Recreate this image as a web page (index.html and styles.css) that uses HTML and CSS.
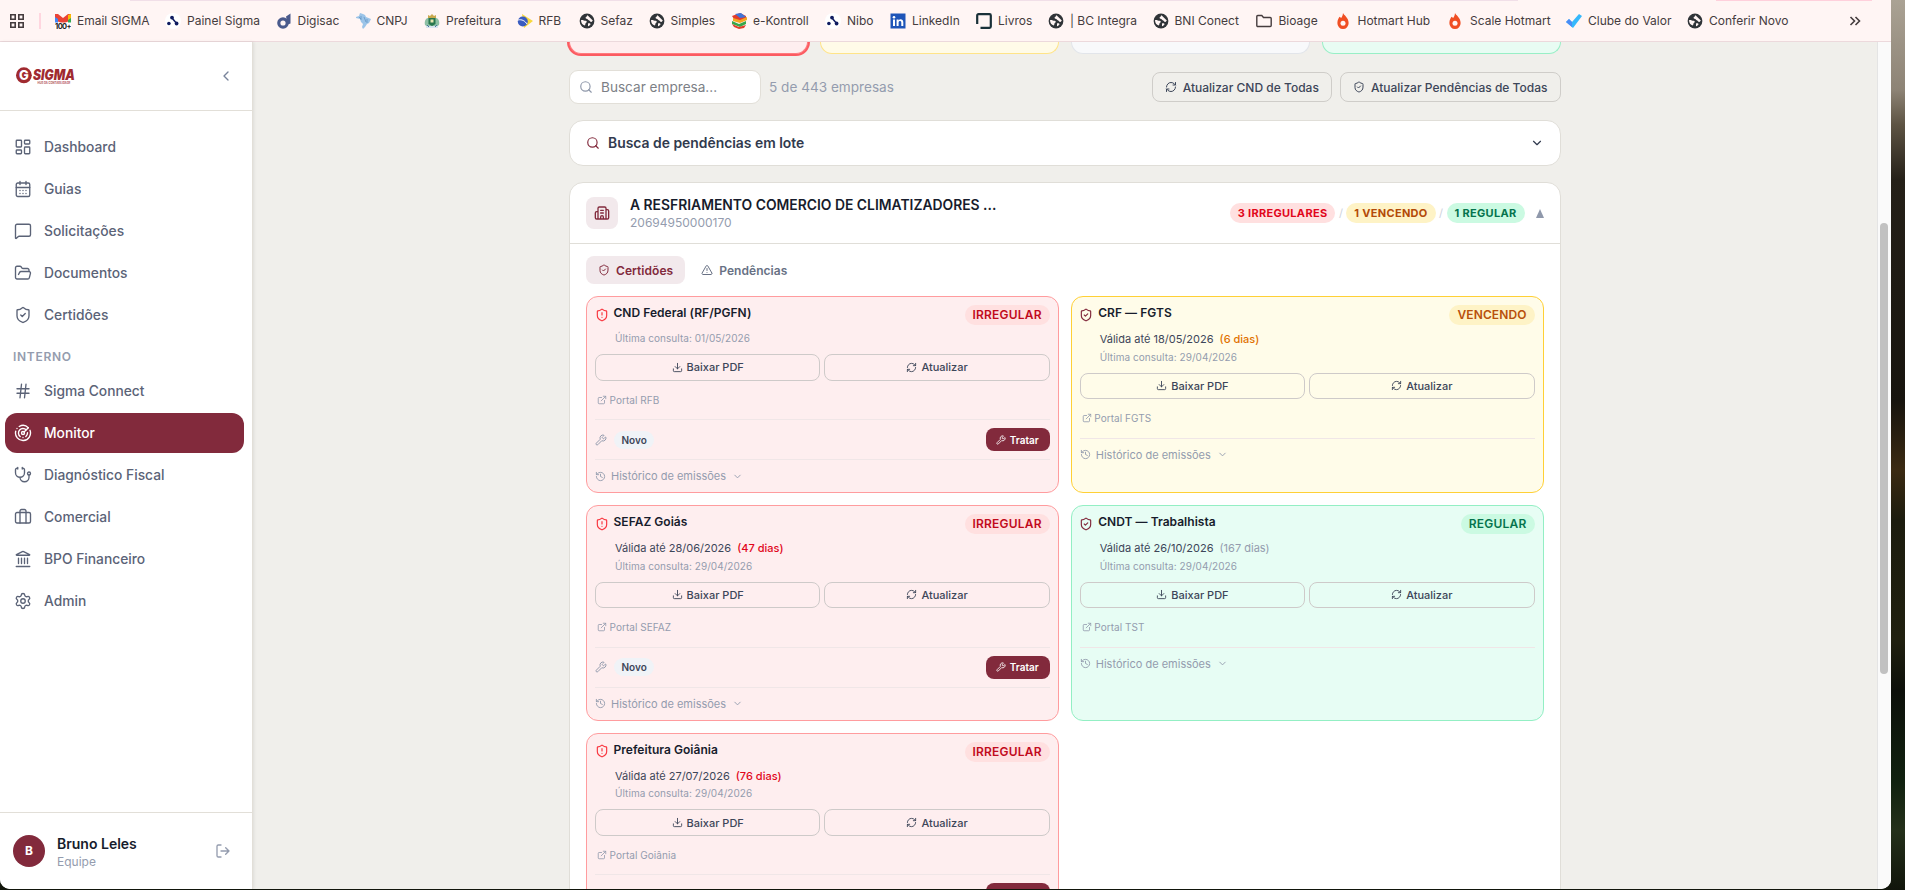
FILE: index.html
```
<!DOCTYPE html>
<html lang="pt-BR">
<head>
    <meta charset="UTF-8">
    <meta name="viewport" content="width=device-width, initial-scale=1.0">
    <title>Monitor - Sigma</title>
    <link rel="stylesheet" href="styles.css">
</head>
<body>
    <svg class="sprite">
        <symbol id="dashboard" viewBox="0 0 24 24"><rect x="3" y="3" width="7" height="9" rx="1"/><rect x="14" y="3" width="7" height="5" rx="1"/><rect x="14" y="12" width="7" height="9" rx="1"/><rect x="3" y="16" width="7" height="5" rx="1"/></symbol>
        <symbol id="calendar" viewBox="0 0 24 24"><path d="M8 2v4M16 2v4M3 10h18M8 14h.01M12 14h.01M16 14h.01M8 18h.01M12 18h.01M16 18h.01"/><rect x="3" y="4" width="18" height="18" rx="2"/></symbol>
        <symbol id="message" viewBox="0 0 24 24"><path d="M22 17a2 2 0 0 1-2 2H6.828a2 2 0 0 0-1.414.586l-2.202 2.202A.71.71 0 0 1 2 21.286V5a2 2 0 0 1 2-2h16a2 2 0 0 1 2 2z"/></symbol>
        <symbol id="folder-open" viewBox="0 0 24 24"><path d="m6 14 1.5-2.9A2 2 0 0 1 9.24 10H20a2 2 0 0 1 1.94 2.5l-1.54 6a2 2 0 0 1-1.95 1.5H4a2 2 0 0 1-2-2V5a2 2 0 0 1 2-2h3.9a2 2 0 0 1 1.69.9l.81 1.2a2 2 0 0 0 1.67.9H18a2 2 0 0 1 2 2v2"/></symbol>
        <symbol id="shield-check" viewBox="0 0 24 24"><path d="M20 13c0 5-3.5 7.5-7.66 8.95a1 1 0 0 1-.67-.01C7.5 20.5 4 18 4 13V6a1 1 0 0 1 1-1c2 0 4.5-1.2 6.24-2.72a1.17 1.17 0 0 1 1.52 0C14.51 3.81 17 5 19 5a1 1 0 0 1 1 1z"/><path d="m9 12 2 2 4-4"/></symbol>
        <symbol id="shield-alert" viewBox="0 0 24 24"><path d="M20 13c0 5-3.5 7.5-7.66 8.95a1 1 0 0 1-.67-.01C7.5 20.5 4 18 4 13V6a1 1 0 0 1 1-1c2 0 4.5-1.2 6.24-2.72a1.17 1.17 0 0 1 1.52 0C14.51 3.81 17 5 19 5a1 1 0 0 1 1 1z"/><path d="M12 8v4M12 16h.01"/></symbol>
        <symbol id="hash" viewBox="0 0 24 24"><path d="M4 9h16M4 15h16M10 3 8 21M16 3l-2 18"/></symbol>
        <symbol id="radar" viewBox="0 0 24 24"><path d="M19.07 4.93A10 10 0 0 0 6.99 3.34M4 6h.01M2.29 9.62A10 10 0 1 0 21.31 8.35M16.24 7.76A6 6 0 1 0 8.23 16.67M12 18h.01M17.99 11.66A6 6 0 0 1 15.77 16.67"/><circle cx="12" cy="12" r="2"/><path d="m13.41 10.59 5.66-5.66"/></symbol>
        <symbol id="stethoscope" viewBox="0 0 24 24"><path d="M11 2v2M5 2v2M5 3H4a2 2 0 0 0-2 2v4a6 6 0 0 0 12 0V5a2 2 0 0 0-2-2h-1M8 15a6 6 0 0 0 12 0v-3"/><circle cx="20" cy="10" r="2"/></symbol>
        <symbol id="briefcase" viewBox="0 0 24 24"><path d="M16 20V4a2 2 0 0 0-2-2h-4a2 2 0 0 0-2 2v16"/><rect x="2" y="6" width="20" height="14" rx="2"/></symbol>
        <symbol id="landmark" viewBox="0 0 24 24"><path d="M10 18v-7M11.12 2.198a2 2 0 0 1 1.76.006l7.866 3.847c.476.233.31.949-.22.949H3.474c-.53 0-.695-.716-.22-.949zM14 18v-7M18 18v-7M3 22h18M6 18v-7"/></symbol>
        <symbol id="settings" viewBox="0 0 24 24"><path d="M9.671 4.136a2.34 2.34 0 0 1 4.659 0 2.34 2.34 0 0 0 3.319 1.915 2.34 2.34 0 0 1 2.33 4.033 2.34 2.34 0 0 0 0 3.831 2.34 2.34 0 0 1-2.33 4.033 2.34 2.34 0 0 0-3.319 1.915 2.34 2.34 0 0 1-4.659 0 2.34 2.34 0 0 0-3.32-1.915 2.34 2.34 0 0 1-2.33-4.033 2.34 2.34 0 0 0 0-3.831A2.34 2.34 0 0 1 6.35 6.051a2.34 2.34 0 0 0 3.319-1.915"/><circle cx="12" cy="12" r="3"/></symbol>
        <symbol id="logout" viewBox="0 0 24 24"><path d="m16 17 5-5-5-5M21 12H9M9 21H5a2 2 0 0 1-2-2V5a2 2 0 0 1 2-2h4"/></symbol>
        <symbol id="chevron-left" viewBox="0 0 24 24"><path d="m15 18-6-6 6-6"/></symbol>
        <symbol id="chevron-down" viewBox="0 0 24 24"><path d="m6 9 6 6 6-6"/></symbol>
        <symbol id="search" viewBox="0 0 24 24"><circle cx="11" cy="11" r="8"/><path d="m21 21-4.34-4.34"/></symbol>
        <symbol id="refresh" viewBox="0 0 24 24"><path d="M3 12a9 9 0 0 1 9-9 9.75 9.75 0 0 1 6.74 2.74L21 8M21 3v5h-5M21 12a9 9 0 0 1-9 9 9.75 9.75 0 0 1-6.74-2.74L3 16M8 16H3v5"/></symbol>
        <symbol id="building" viewBox="0 0 24 24"><path d="M10 12h4M10 8h4M14 21v-3a2 2 0 0 0-4 0v3M6 10H4a2 2 0 0 0-2 2v7a2 2 0 0 0 2 2h16a2 2 0 0 0 2-2V9a2 2 0 0 0-2-2h-2M6 21V5a2 2 0 0 1 2-2h8a2 2 0 0 1 2 2v16"/></symbol>
        <symbol id="alert" viewBox="0 0 24 24"><path d="m21.73 18-8-14a2 2 0 0 0-3.48 0l-8 14A2 2 0 0 0 4 21h16a2 2 0 0 0 1.73-3M12 9v4M12 17h.01"/></symbol>
        <symbol id="download" viewBox="0 0 24 24"><path d="M12 15V3M21 15v4a2 2 0 0 1-2 2H5a2 2 0 0 1-2-2v-4M7 10l5 5 5-5"/></symbol>
        <symbol id="external" viewBox="0 0 24 24"><path d="M15 3h6v6M10 14 21 3M18 13v6a2 2 0 0 1-2 2H5a2 2 0 0 1-2-2V8a2 2 0 0 1 2-2h6"/></symbol>
        <symbol id="wrench" viewBox="0 0 24 24"><path d="M14.7 6.3a1 1 0 0 0 0 1.4l1.6 1.6a1 1 0 0 0 1.4 0l3.106-3.105c.32-.322.863-.22.983.218a6 6 0 0 1-8.259 7.057l-7.91 7.91a1 1 0 0 1-2.999-3l7.91-7.91a6 6 0 0 1 7.057-8.259c.438.12.54.662.219.984z"/></symbol>
        <symbol id="history" viewBox="0 0 24 24"><path d="M3 12a9 9 0 1 0 9-9 9.75 9.75 0 0 0-6.74 2.74L3 8M3 3v5h5M12 7v5l4 2"/></symbol>
        <symbol id="globe" viewBox="0 0 16 16"><circle cx="8" cy="8" r="7.4" fill="#303438"/><path d="M2 7c2-.4 3 .6 4.600.8 1.400.2 1.600 1.600.5 2-.9.300-.4 1.800-1.300 2.600C3.500 12 2 10 2 7zM8.500 2.200c-1 .7-.5 1.500-1.400 1.900-.9.400-.8 1.500.3 1.600 1.500.1 1.500 1.500 2.700 1.700 1 .1.900 1.700 2.200 1.500.6-.1 1.200-.7 1.500-1.300M9 10.500c.9-.6 2.500-.2 2.500.6 0 .900-1.200 2-2.500 2.200z" fill="#fff5f4"/></symbol>
        <symbol id="dots" viewBox="0 0 16 16"><circle cx="8" cy="8" r="8" fill="#fff"/><circle cx="7" cy="4.600" r="1.900" fill="#101c60"/><circle cx="3.900" cy="10.500" r="1.800" fill="#101c60"/><circle cx="11.600" cy="10.500" r="1.900" fill="#101c60"/><path d="M7 5l4.600 5.500" stroke="#101c60" stroke-width="1.500"/></symbol>
        <symbol id="flame" viewBox="0 0 16 16"><path d="M8 0c.7 2 5.600 4.500 5.600 9.800A5.600 5.900 0 0 1 8 16a5.600 5.900 0 0 1-5.600-6.200C2.400 7 3.700 5 4.600 3.800l1.600 1.300C7 4 7.900 2 8 0z" fill="#f04e23"/><circle cx="8" cy="10.300" r="2.500" fill="#fff5f4"/></symbol>
    </svg>

    <div class="window">
        <div class="bookmarks">
            <div class="tab-edges"><i></i><i></i></div>
            <svg class="apps" viewBox="0 0 14 14"><path d="M.8.800h4.400v4.400H.8zM8.800.8h4.400v4.400H8.800zM.8 8.800h4.400v4.400H.8zM8.800 8.800h4.400v4.400H8.800z"/></svg>
            <span class="divider"></span>
            <div class="bookmark-list">
                <a><svg viewBox="0 0 16 16"><path d="M0 1h3l5 4 5-4h3v6l-8 4-8-4z" fill="#ea4335"/><path d="M0 4v6h3V6z" fill="#4285f4"/><path d="M16 4v6h-3V6z" fill="#34a853"/><path d="M13 2l3-1v4l-3 2z" fill="#fbbc04"/><path d="M0 9.500h16V16H0z" fill="#fff"/><text x="0" y="15.500" font-size="7.500" font-weight="700" letter-spacing="-.6" fill="#222">100+</text></svg>Email SIGMA</a>
                <a><svg><use href="#dots"/></svg>Painel Sigma</a>
                <a><svg viewBox="0 0 16 16"><circle cx="7" cy="10" r="4.200" fill="none" stroke="#4a5a8c" stroke-width="3.200"/><path d="M10 3.500 14.500.5v10l-3 1z" fill="#4a5a8c"/></svg>Digisac</a>
                <a><svg viewBox="0 0 16 16"><path d="M1 4l3-1 1-3 3 1 2 1 1 2 5 2-2 4-2 1-2 3-2 2-1-2 1-3-2-2-1-3-4-1z" fill="#9cc4e8"/><path d="M6 3v4M9 4l2 5M12 6v4M4 4l2 2" stroke="#5c8fc0" stroke-width=".7"/></svg>CNPJ</a>
                <a><svg viewBox="0 0 16 16"><path d="M4 5V2l2 1 2-2 2 2 2-1v3z" fill="#c9a94f"/><path d="M1 12C0 8 2 5 4 5h8c2 0 4 3 3 7l-3 2H4z" fill="#8dbfa4"/><path d="M4.500 5h7v6L8 13l-3.500-2z" fill="#28764d"/><path d="M6.500 6.500h3v3h-3z" fill="#e8e4b0"/><path d="M2 13h12v2H2z" fill="#d9e4ee"/><path d="M3 12l2 2M13 12l-2 2" stroke="#4572a0"/></svg>Prefeitura</a>
                <a><svg viewBox="0 0 16 16"><path d="M5 1l11 7-9 7z" fill="#f7d83c"/><circle cx="5.800" cy="8.500" r="5" fill="#3a5cc0"/><path d="M1 7c4-1 7 1 9 4" stroke="#fff" fill="none"/></svg>RFB</a>
                <a><svg><use href="#globe"/></svg>Sefaz</a>
                <a><svg><use href="#globe"/></svg>Simples</a>
                <a><svg viewBox="0 0 16 16"><path d="M1 3l8-3 6 3v3L8 8 3 6z" fill="#e33b2c"/><path d="M4 1l6-1 5 4-6 1z" fill="#3f74d8"/><path d="M2 5l7 2 7-3v3L9 10 2 8z" fill="#f4a720"/><path d="M1 8l7 3 7-3v3l-6 3-8-3z" fill="#37a84a"/><path d="M1 11l7 3 7-2-2 3-5 1-5-2z" fill="#e0402a"/></svg>e-Kontroll</a>
                <a><svg><use href="#dots"/></svg>Nibo</a>
                <a><svg viewBox="0 0 16 16"><path d="M.5.500h15v15H.5z" fill="#1f55b8"/><circle cx="4" cy="4.200" r="1.300" fill="#fff"/><path d="M3 6.500h2V13H3zM6.600 6.500h2v.9c1.200-1.800 4.700-1.300 4.700 1.800V13h-2V9.600c0-2-2.700-2-2.700 0V13h-2z" fill="#fff"/></svg>LinkedIn</a>
                <a><svg viewBox="0 0 16 16"><path d="M1.200 11V2.500A1.300 1.300 0 0 1 2.500 1.200h11a1.300 1.300 0 0 1 1.300 1.300v11a1.300 1.300 0 0 1-1.300 1.300H4.500" fill="none" stroke="#193038" stroke-width="2.200"/></svg>Livros</a>
                <a><svg><use href="#globe"/></svg>| BC Integra</a>
                <a><svg><use href="#globe"/></svg>BNI Conect</a>
                <a class="folder"><svg viewBox="0 0 16 16"><path d="M.8 3.500a1 1 0 0 1 1-1h4l1.700 2h6.700a1 1 0 0 1 1 1v7a1 1 0 0 1-1 1H1.800a1 1 0 0 1-1-1z" fill="none" stroke="#453c3e" stroke-width="1.400"/></svg>Bioage</a>
                <a class="hotmart"><svg><use href="#flame"/></svg>Hotmart Hub</a>
                <a class="hotmart"><svg><use href="#flame"/></svg>Scale Hotmart</a>
                <a><svg viewBox="0 0 16 16"><path d="M0 9l3-3 3 3 7-8 3 2L7 15z" fill="#35b8fb"/><path d="M0 9l3-3 3 3v5z" fill="#4a8cf6"/></svg>Clube do Valor</a>
                <a><svg><use href="#globe"/></svg>Conferir Novo</a>
            </div>
            <svg class="more" viewBox="0 0 12 10"><path d="m1.500 1 4 4-4 4M6.500 1l4 4-4 4"/></svg>
        </div>

        <div class="app">
            <aside class="sidebar">
                <div class="sidebar-header">
                    <svg class="logo" viewBox="0 0 60 20">
                        <ellipse cx="7.900" cy="9.300" rx="7.900" ry="8" fill="#a02a30"/>
                        <text x="3" y="13.800" font-size="13" font-weight="800" fill="#fff">G</text>
                        <text x="17" y="13.800" font-size="14" font-weight="900" font-style="italic" textLength="42" lengthAdjust="spacingAndGlyphs" fill="#a02a30">SIGMA</text>
                        <text x="21.500" y="18.200" font-size="3" font-weight="700" textLength="33" lengthAdjust="spacingAndGlyphs" fill="#b5575c">HUB DA CONTABILIDADE</text>
                    </svg>
                    <svg class="icon collapse"><use href="#chevron-left"/></svg>
                </div>
                <nav class="nav">
                    <a><svg class="icon"><use href="#dashboard"/></svg>Dashboard</a>
                    <a><svg class="icon"><use href="#calendar"/></svg>Guias</a>
                    <a><svg class="icon"><use href="#message"/></svg>Solicitações</a>
                    <a><svg class="icon"><use href="#folder-open"/></svg>Documentos</a>
                    <a><svg class="icon"><use href="#shield-check"/></svg>Certidões</a>
                    <h6>INTERNO</h6>
                    <a><svg class="icon"><use href="#hash"/></svg>Sigma Connect</a>
                    <a class="active"><svg class="icon"><use href="#radar"/></svg>Monitor</a>
                    <a><svg class="icon"><use href="#stethoscope"/></svg>Diagnóstico Fiscal</a>
                    <a><svg class="icon"><use href="#briefcase"/></svg>Comercial</a>
                    <a><svg class="icon"><use href="#landmark"/></svg>BPO Financeiro</a>
                    <a><svg class="icon"><use href="#settings"/></svg>Admin</a>
                </nav>
                <div class="user">
                    <span class="avatar">B</span>
                    <div class="user-info">
                        <strong>Bruno Leles</strong>
                        <span>Equipe</span>
                    </div>
                    <svg class="icon"><use href="#logout"/></svg>
                </div>
            </aside>

            <main class="main">
                <div class="content">
                    <div class="summary">
                        <div class="summary-card selected"></div>
                        <div class="summary-card yellow"></div>
                        <div class="summary-card gray"></div>
                        <div class="summary-card green"></div>
                    </div>

                    <div class="toolbar">
                        <label class="search"><svg class="icon"><use href="#search"/></svg><input type="text" placeholder="Buscar empresa..."></label>
                        <span class="count">5 de 443 empresas</span>
                        <button class="btn"><svg class="icon"><use href="#refresh"/></svg>Atualizar CND de Todas</button>
                        <button class="btn"><svg class="icon"><use href="#shield-check"/></svg>Atualizar Pendências de Todas</button>
                    </div>

                    <div class="batch">
                        <svg class="icon"><use href="#search"/></svg>
                        <span>Busca de pendências em lote</span>
                        <svg class="icon arrow"><use href="#chevron-down"/></svg>
                    </div>

                    <section class="company">
                        <header class="company-header">
                            <span class="company-icon"><svg class="icon"><use href="#building"/></svg></span>
                            <div class="company-name">
                                <h2>A RESFRIAMENTO COMERCIO DE CLIMATIZADORES ...</h2>
                                <span>20694950000170</span>
                            </div>
                            <div class="totals">
                                <span class="total red">3 IRREGULARES</span><i>/</i>
                                <span class="total yellow">1 VENCENDO</span><i>/</i>
                                <span class="total green">1 REGULAR</span>
                            </div>
                            <svg class="toggle" viewBox="0 0 8 9"><path d="M4 0l4 9H0z"/></svg>
                        </header>

                        <div class="tabs">
                            <a class="tab active"><svg class="icon"><use href="#shield-check"/></svg>Certidões</a>
                            <a class="tab"><svg class="icon"><use href="#alert"/></svg>Pendências</a>
                        </div>

                        <div class="certs">
                            <article class="cert red">
                                <div class="cert-header"><svg class="icon"><use href="#shield-alert"/></svg><h3>CND Federal (RF/PGFN)</h3><span class="badge">IRREGULAR</span></div>
                                <div class="dates">
                                    <p class="checked">Última consulta: 01/05/2026</p>
                                </div>
                                <div class="actions">
                                    <button><svg class="icon"><use href="#download"/></svg>Baixar PDF</button>
                                    <button><svg class="icon"><use href="#refresh"/></svg>Atualizar</button>
                                </div>
                                <a class="portal"><svg class="icon"><use href="#external"/></svg>Portal RFB</a>
                                <div class="treat"><svg class="icon"><use href="#wrench"/></svg><span class="status">Novo</span><button><svg class="icon"><use href="#wrench"/></svg>Tratar</button></div>
                                <div class="history"><svg class="icon"><use href="#history"/></svg>Histórico de emissões<svg class="icon arrow"><use href="#chevron-down"/></svg></div>
                            </article>

                            <article class="cert yellow">
                                <div class="cert-header"><svg class="icon"><use href="#shield-check"/></svg><h3>CRF — FGTS</h3><span class="badge">VENCENDO</span></div>
                                <div class="dates">
                                    <p class="valid">Válida até 18/05/2026 <b>(6 dias)</b></p>
                                    <p class="checked">Última consulta: 29/04/2026</p>
                                </div>
                                <div class="actions">
                                    <button><svg class="icon"><use href="#download"/></svg>Baixar PDF</button>
                                    <button><svg class="icon"><use href="#refresh"/></svg>Atualizar</button>
                                </div>
                                <a class="portal"><svg class="icon"><use href="#external"/></svg>Portal FGTS</a>
                                <div class="history"><svg class="icon"><use href="#history"/></svg>Histórico de emissões<svg class="icon arrow"><use href="#chevron-down"/></svg></div>
                            </article>

                            <article class="cert red">
                                <div class="cert-header"><svg class="icon"><use href="#shield-alert"/></svg><h3>SEFAZ Goiás</h3><span class="badge">IRREGULAR</span></div>
                                <div class="dates">
                                    <p class="valid">Válida até 28/06/2026 <b>(47 dias)</b></p>
                                    <p class="checked">Última consulta: 29/04/2026</p>
                                </div>
                                <div class="actions">
                                    <button><svg class="icon"><use href="#download"/></svg>Baixar PDF</button>
                                    <button><svg class="icon"><use href="#refresh"/></svg>Atualizar</button>
                                </div>
                                <a class="portal"><svg class="icon"><use href="#external"/></svg>Portal SEFAZ</a>
                                <div class="treat"><svg class="icon"><use href="#wrench"/></svg><span class="status">Novo</span><button><svg class="icon"><use href="#wrench"/></svg>Tratar</button></div>
                                <div class="history"><svg class="icon"><use href="#history"/></svg>Histórico de emissões<svg class="icon arrow"><use href="#chevron-down"/></svg></div>
                            </article>

                            <article class="cert green">
                                <div class="cert-header"><svg class="icon"><use href="#shield-check"/></svg><h3>CNDT — Trabalhista</h3><span class="badge">REGULAR</span></div>
                                <div class="dates">
                                    <p class="valid">Válida até 26/10/2026 <b>(167 dias)</b></p>
                                    <p class="checked">Última consulta: 29/04/2026</p>
                                </div>
                                <div class="actions">
                                    <button><svg class="icon"><use href="#download"/></svg>Baixar PDF</button>
                                    <button><svg class="icon"><use href="#refresh"/></svg>Atualizar</button>
                                </div>
                                <a class="portal"><svg class="icon"><use href="#external"/></svg>Portal TST</a>
                                <div class="history"><svg class="icon"><use href="#history"/></svg>Histórico de emissões<svg class="icon arrow"><use href="#chevron-down"/></svg></div>
                            </article>

                            <article class="cert red">
                                <div class="cert-header"><svg class="icon"><use href="#shield-alert"/></svg><h3>Prefeitura Goiânia</h3><span class="badge">IRREGULAR</span></div>
                                <div class="dates">
                                    <p class="valid">Válida até 27/07/2026 <b>(76 dias)</b></p>
                                    <p class="checked">Última consulta: 29/04/2026</p>
                                </div>
                                <div class="actions">
                                    <button><svg class="icon"><use href="#download"/></svg>Baixar PDF</button>
                                    <button><svg class="icon"><use href="#refresh"/></svg>Atualizar</button>
                                </div>
                                <a class="portal"><svg class="icon"><use href="#external"/></svg>Portal Goiânia</a>
                                <div class="treat"><button></button></div>
                            </article>
                        </div>
                    </section>
                </div>
            </main>
            <div class="scrollbar"><span></span></div>
        </div>
    </div>
</body>
</html>
```
FILE: styles.css
```
* {
    box-sizing: border-box;
}
body {
    margin: 0;
    height: 890px;
    overflow: hidden;
    font-family: Inter, "Liberation Sans", sans-serif;
    background: linear-gradient(#aaa294 0, #8d8375 90px, #5d5343 125px, #252018 180px, #17140e 400px, #3b2a12 470px, #1c1c0e 520px, #20200f 640px, #0d100a 690px, #10210f 780px, #24301a 830px, #11150b 890px);
}
h2, h3, h6, p {
    margin: 0;
}
button {
    font-family: inherit;
    background: transparent;
}
.sprite {
    position: absolute;
    width: 0;
    height: 0;
}
.icon {
    flex: none;
    width: 14px;
    height: 14px;
    fill: none;
    stroke: currentColor;
    stroke-width: 2;
    stroke-linecap: round;
    stroke-linejoin: round;
}
.window {
    display: flex;
    flex-direction: column;
    width: 1891px;
    height: 889px;
    border-radius: 0 0 10px 10px;
    overflow: hidden;
    background: #fff;
}

/* bookmarks bar */
.bookmarks {
    position: relative;
    flex: none;
    display: flex;
    align-items: center;
    height: 42px;
    padding-left: 10px;
    background: #fff5f4;
    border-bottom: 1px solid #ecd9dc;
}
.tab-edges {
    position: absolute;
    top: 0;
    left: 130px;
    right: 19px;
    display: flex;
    justify-content: space-between;
}
.tab-edges i {
    width: 1388px;
    height: 1px;
    background: #f1dfe8;
}
.tab-edges i:last-child {
    width: 156px;
    background: #ffd0dc;
}
.apps {
    width: 14px;
    height: 14px;
    fill: none;
    stroke: #453c3e;
    stroke-width: 1.6;
}
.divider {
    width: 2px;
    height: 16px;
    margin: 0 14px 0 15px;
    background: #ffd6df;
}
.bookmark-list {
    display: grid;
    grid-template-columns: 110px 110.5px 79px 69.5px 92.5px 62px 70px 82.5px 94px 65px 86px 72px 104.5px 103px 79px 112.5px 119px 121px 162px;
}
.bookmark-list a {
    display: flex;
    align-items: center;
    gap: 6px;
    font-size: 12px;
    color: #453c3e;
    white-space: nowrap;
}
.bookmark-list .folder,
.bookmark-list .hotmart {
    gap: 7px;
}
.bookmark-list svg {
    flex: none;
    width: 16px;
    height: 16px;
}
.more {
    width: 12px;
    height: 10px;
    fill: none;
    stroke: #453c3e;
    stroke-width: 1.6;
}

/* sidebar */
.app {
    flex: 1;
    display: flex;
    min-height: 0;
}
.sidebar {
    position: relative;
    flex: none;
    display: flex;
    flex-direction: column;
    width: 253px;
    background: #fff;
    border-right: 1px solid #e2dfd8;
    box-shadow: 1px 0 3px rgba(0, 0, 0, 0.08);
}
.sidebar-header {
    display: flex;
    align-items: center;
    justify-content: space-between;
    height: 69px;
    padding: 0 18px 0 16px;
    border-bottom: 1px solid #e2dfd8;
}
.logo {
    width: 60px;
    height: 20px;
    overflow: visible;
}
.collapse {
    width: 16px;
    height: 16px;
    color: #77839a;
}
.nav {
    flex: 1;
    display: flex;
    flex-direction: column;
    gap: 2px;
    padding: 16px 8px 0 5px;
}
.nav a {
    display: flex;
    align-items: center;
    gap: 12px;
    height: 40px;
    padding: 0 0 0 9px;
    border-radius: 12px;
    font-size: 13.8px;
    font-weight: 500;
    color: #5b6377;
}
.nav .icon {
    width: 18px;
    height: 18px;
    stroke-width: 1.8;
}
.nav .active {
    background: #822a3c;
    color: #fff;
}
.nav h6 {
    height: 32px;
    padding: 11px 8px 0;
    font-size: 12px;
    line-height: 18px;
    font-weight: 600;
    letter-spacing: 0.7px;
    color: #949cae;
}
.user {
    display: flex;
    align-items: center;
    height: 77px;
    padding: 0 21px 0 13px;
    border-top: 1px solid #e2dfd8;
}
.avatar {
    width: 32px;
    height: 32px;
    border-radius: 50%;
    background: #822a3c;
    color: #fff;
    font-size: 12px;
    font-weight: 700;
    line-height: 32px;
    text-align: center;
}
.user-info {
    flex: 1;
    display: flex;
    flex-direction: column;
    padding: 2px 0 0 12px;
    font-size: 12px;
    line-height: 17px;
    color: #949cae;
}
.user-info strong {
    font-size: 14px;
    line-height: 19px;
    font-weight: 600;
    color: #171c2c;
}
.user .icon {
    width: 16px;
    height: 16px;
    color: #949cae;
}

/* main area */
.main {
    flex: 1;
    overflow: hidden;
    background: #f0efeb;
}
.content {
    width: 991.5px;
    margin-left: 316px;
}
.summary {
    display: grid;
    grid-template-columns: repeat(4, 1fr);
    gap: 12px;
}
.summary-card {
    height: 12px;
    border: 1px solid #ffa2a2;
    border-top: 0;
    border-radius: 0 0 12px 12px;
    background: #feeeef;
}
.summary-card.selected {
    border-color: #ff7a7e;
    box-shadow: 0 0 0 2px #fb5b61;
}
.summary-card.yellow {
    background: #fffbe8;
    border-color: #ffe488;
}
.summary-card.gray {
    background: #f8f9fb;
    border-color: #e2e5ea;
}
.summary-card.green {
    background: #e8fcf3;
    border-color: #98efc6;
}
.toolbar {
    display: flex;
    align-items: center;
    gap: 8px;
    height: 34px;
    margin-top: 16px;
}
.search {
    display: flex;
    align-items: center;
    gap: 8px;
    width: 192px;
    height: 34px;
    padding-left: 9px;
    border: 1px solid #e2dfd8;
    border-radius: 9px;
    background: #fff;
    color: #8f98aa;
}
.search input {
    width: 140px;
    padding: 0;
    border: 0;
    outline: 0;
    font-family: inherit;
    font-size: 13.6px;
}
.search input::placeholder {
    color: #7c7f86;
}
.count {
    flex: 1;
    font-size: 13.6px;
    color: #949cae;
}
.btn {
    display: flex;
    align-items: center;
    gap: 6px;
    height: 30px;
    padding: 0 12px;
    border: 1px solid #cfcdc9;
    border-radius: 8px;
    font-size: 12px;
    font-weight: 500;
    letter-spacing: 0.01px;
    color: #3d4659;
}
.btn .icon {
    width: 12px;
    height: 12px;
}
.batch {
    display: flex;
    align-items: center;
    gap: 8px;
    height: 46px;
    margin-top: 16px;
    padding: 0 16px;
    border: 1px solid #e0ded8;
    border-radius: 14px;
    background: #fff;
    font-size: 13.9px;
    font-weight: 600;
    color: #313a4e;
}
.batch .icon {
    color: #822a3c;
}
.batch .arrow {
    margin-left: auto;
    color: #313a4e;
}

/* company */
.company {
    height: 760px;
    margin-top: 16px;
    border: 1px solid #e0ded8;
    border-radius: 14px;
    background: #fff;
}
.company-header {
    display: flex;
    align-items: center;
    height: 61px;
    padding: 0 16px;
    border-bottom: 1px solid #e0ded8;
}
.company-icon {
    display: flex;
    align-items: center;
    justify-content: center;
    width: 32px;
    height: 32px;
    border-radius: 8px;
    background: #f2e9ec;
    color: #822a3c;
}
.company-icon .icon {
    width: 16px;
    height: 16px;
}
.company-name {
    flex: 1;
    padding-left: 12px;
    font-size: 12px;
    line-height: 16px;
    color: #949cae;
}
.company-name span {
    display: block;
}
.company-name h2 {
    font-size: 13.87px;
    line-height: 20px;
    font-weight: 600;
    color: #171c2c;
}
.totals {
    display: flex;
    align-items: center;
    gap: 3.5px;
    font-size: 11px;
}
.totals i {
    font-style: normal;
    color: #cdd2dc;
}
.total {
    height: 20px;
    padding: 0 8px;
    border-radius: 10px;
    font-weight: 700;
    line-height: 20px;
    letter-spacing: 0.3px;
}
.total.red {
    background: #ffe0e0;
    color: #e1061b;
}
.total.yellow {
    background: #fef3c6;
    color: #b34a08;
}
.total.green {
    background: #cbfae2;
    color: #05734d;
}
.toggle {
    width: 8px;
    height: 9px;
    margin: 0 0 0 11px;
    fill: #8f98ab;
}
.tabs {
    display: flex;
    gap: 4px;
    padding: 12px 16px;
}
.tab {
    display: flex;
    align-items: center;
    gap: 6px;
    height: 28px;
    padding: 0 12px;
    border-radius: 8px;
    font-size: 12px;
    font-weight: 600;
    letter-spacing: 0.05px;
    color: #687184;
}
.tab .icon {
    width: 12px;
    height: 12px;
}
.tab.active {
    background: #f2e9ec;
    color: #822a3c;
}

/* certificates */
.certs {
    display: grid;
    grid-template-columns: 1fr 1fr;
    gap: 12px;
    padding: 0 16px;
}
.cert {
    padding: 8px 8px 0;
    border: 1px solid #ff9c9e;
    border-radius: 12px;
    background: #feeeef;
}
.cert.yellow {
    border-color: #ffd036;
    background: #fffce9;
}
.cert.green {
    border-color: #93efc4;
    background: #e7fdf4;
}
.cert-header {
    display: flex;
    align-items: center;
    height: 20px;
    color: #822a3c;
}
.cert.red .cert-header {
    color: #f9363f;
}
.cert-header .icon {
    margin: -1px 5px 0 -0.5px;
}
.cert-header h3 {
    flex: 1;
    margin-top: -5px;
    font-size: 12px;
    font-weight: 600;
    letter-spacing: 0.03px;
    color: #171c2c;
}
.badge {
    height: 20px;
    padding: 0 8px;
    border-radius: 10px;
    background: #ffe0e0;
    color: #c10a1c;
    font-size: 12px;
    font-weight: 600;
    line-height: 20px;
    letter-spacing: 0.2px;
}
.yellow .badge {
    background: #fef3c6;
    color: #b8500b;
    letter-spacing: 0.1px;
}
.green .badge {
    background: #cbfae2;
    color: #05734d;
}
.dates {
    padding: 4px 0 6px 20px;
}
.valid {
    height: 18.7px;
    font-size: 11px;
    line-height: 20.5px;
    color: #3d4659;
}
.valid b {
    margin-left: 3px;
    font-weight: 500;
    color: #e1061b;
}
.yellow .valid b {
    color: #e17100;
}
.green .valid b {
    font-weight: 400;
    color: #949cae;
}
.checked {
    height: 19px;
    font-size: 10px;
    line-height: 19px;
    letter-spacing: 0.05px;
    color: #949cae;
}
.actions {
    display: grid;
    grid-template-columns: 1fr 1fr;
    gap: 4px;
}
.actions button {
    display: flex;
    align-items: center;
    justify-content: center;
    gap: 4px;
    height: 26.5px;
    padding: 0;
    border: 1px solid #cecac9;
    border-radius: 8px;
    font-size: 11px;
    font-weight: 500;
    color: #3d4659;
}
.actions .icon {
    width: 11px;
    height: 11px;
}
.portal .icon {
    width: 10px;
    height: 10px;
}
.portal {
    display: flex;
    align-items: center;
    gap: 2.5px;
    height: 38.5px;
    padding-left: 2px;
    font-size: 10px;
    letter-spacing: 0.05px;
    color: #949cae;
}
.treat {
    display: flex;
    align-items: center;
    height: 40px;
    border-top: 1px solid #f0e6e7;
    color: #949cae;
}
.treat > .icon {
    width: 12px;
    height: 12px;
}
.status {
    height: 18px;
    margin-left: 7px;
    padding: 0 7.500px;
    border-radius: 9px;
    background: #f0f3f7;
    font-size: 10px;
    font-weight: 600;
    line-height: 18px;
    color: #3d4659;
}
.treat button {
    display: flex;
    align-items: center;
    gap: 4px;
    min-width: 64px;
    height: 23px;
    margin-left: auto;
    padding: 0 10px;
    border: 0;
    border-radius: 8px;
    background: #822a3c;
    font-size: 10px;
    font-weight: 600;
    color: #fff;
}
.treat button .icon {
    width: 10px;
    height: 10px;
}
.history {
    display: flex;
    align-items: center;
    gap: 5px;
    height: 33px;
    border-top: 1px solid #f0e6e7;
    font-size: 11px;
    color: #949cae;
}
.history .icon {
    width: 11px;
    height: 11px;
}
.history .arrow {
    margin-left: 1px;
}

/* page scrollbar */
.scrollbar {
    flex: none;
    width: 14px;
    padding: 181px 2px 0 2px;
    border-left: 1px solid #e4e4e4;
    background: #fafafa;
}
.scrollbar span {
    display: block;
    width: 8px;
    height: 451px;
    border-radius: 4px;
    background: #c1c1c1;
}
```
